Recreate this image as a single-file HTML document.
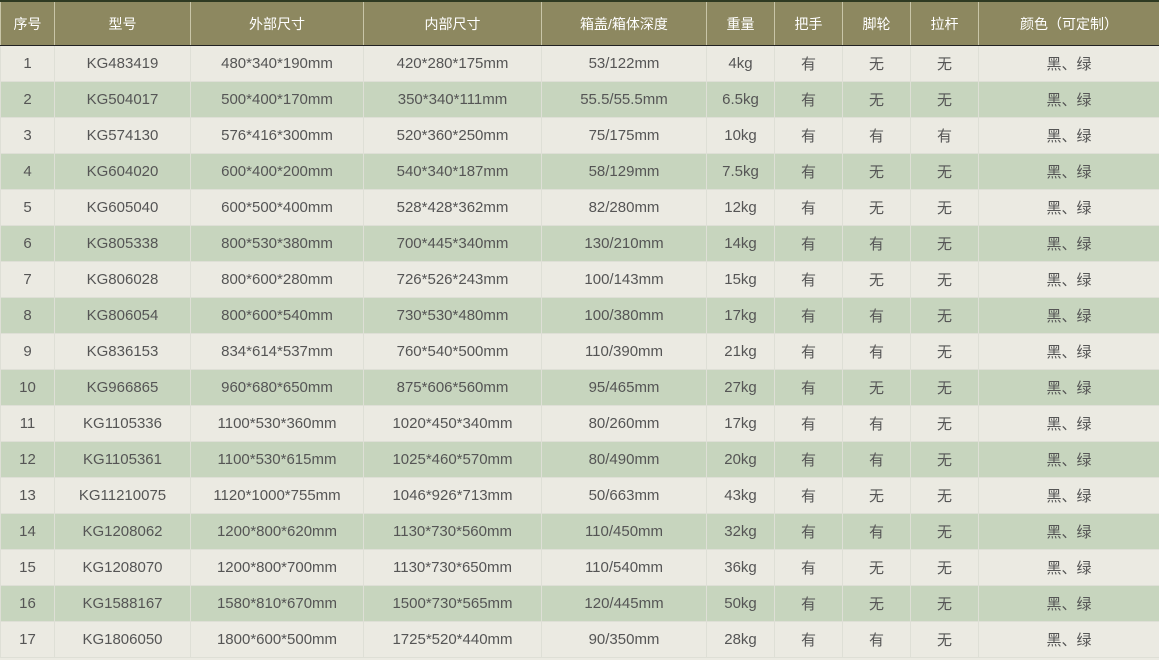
<!DOCTYPE html><html><head><meta charset="utf-8"><style>
body{margin:0;width:1159px;height:660px;overflow:hidden;background:#ebeae2;font-family:"Liberation Sans","Noto Sans CJK SC",sans-serif}
table{border-collapse:collapse;table-layout:fixed;width:1159px}
td,th{text-align:center;padding:0;border:1px solid #dedfd6;font-size:15px;color:#555;font-weight:normal}
th{background:#8d8860;color:#fff;height:43px;font-size:14px;border-color:#c9c5a8;border-top:2px solid #2f3a22;border-bottom:1px solid #222}
td{height:35px}
tr:nth-child(odd) td{background:#ebeae2}
tr:nth-child(even) td{background:#c7d5be}
</style></head><body><table>
<colgroup><col style="width:54px"><col style="width:136px"><col style="width:173px"><col style="width:178px"><col style="width:165px"><col style="width:68px"><col style="width:68px"><col style="width:68px"><col style="width:68px"><col style="width:181px"></colgroup>
<thead><tr><th>序号</th><th>型号</th><th>外部尺寸</th><th>内部尺寸</th><th>箱盖/箱体深度</th><th>重量</th><th>把手</th><th>脚轮</th><th>拉杆</th><th>颜色（可定制）</th></tr></thead>
<tbody>
<tr><td>1</td><td>KG483419</td><td>480*340*190mm</td><td>420*280*175mm</td><td>53/122mm</td><td>4kg</td><td>有</td><td>无</td><td>无</td><td>黑、绿</td></tr>
<tr><td>2</td><td>KG504017</td><td>500*400*170mm</td><td>350*340*111mm</td><td>55.5/55.5mm</td><td>6.5kg</td><td>有</td><td>无</td><td>无</td><td>黑、绿</td></tr>
<tr><td>3</td><td>KG574130</td><td>576*416*300mm</td><td>520*360*250mm</td><td>75/175mm</td><td>10kg</td><td>有</td><td>有</td><td>有</td><td>黑、绿</td></tr>
<tr><td>4</td><td>KG604020</td><td>600*400*200mm</td><td>540*340*187mm</td><td>58/129mm</td><td>7.5kg</td><td>有</td><td>无</td><td>无</td><td>黑、绿</td></tr>
<tr><td>5</td><td>KG605040</td><td>600*500*400mm</td><td>528*428*362mm</td><td>82/280mm</td><td>12kg</td><td>有</td><td>无</td><td>无</td><td>黑、绿</td></tr>
<tr><td>6</td><td>KG805338</td><td>800*530*380mm</td><td>700*445*340mm</td><td>130/210mm</td><td>14kg</td><td>有</td><td>有</td><td>无</td><td>黑、绿</td></tr>
<tr><td>7</td><td>KG806028</td><td>800*600*280mm</td><td>726*526*243mm</td><td>100/143mm</td><td>15kg</td><td>有</td><td>无</td><td>无</td><td>黑、绿</td></tr>
<tr><td>8</td><td>KG806054</td><td>800*600*540mm</td><td>730*530*480mm</td><td>100/380mm</td><td>17kg</td><td>有</td><td>有</td><td>无</td><td>黑、绿</td></tr>
<tr><td>9</td><td>KG836153</td><td>834*614*537mm</td><td>760*540*500mm</td><td>110/390mm</td><td>21kg</td><td>有</td><td>有</td><td>无</td><td>黑、绿</td></tr>
<tr><td>10</td><td>KG966865</td><td>960*680*650mm</td><td>875*606*560mm</td><td>95/465mm</td><td>27kg</td><td>有</td><td>无</td><td>无</td><td>黑、绿</td></tr>
<tr><td>11</td><td>KG1105336</td><td>1100*530*360mm</td><td>1020*450*340mm</td><td>80/260mm</td><td>17kg</td><td>有</td><td>有</td><td>无</td><td>黑、绿</td></tr>
<tr><td>12</td><td>KG1105361</td><td>1100*530*615mm</td><td>1025*460*570mm</td><td>80/490mm</td><td>20kg</td><td>有</td><td>有</td><td>无</td><td>黑、绿</td></tr>
<tr><td>13</td><td>KG11210075</td><td>1120*1000*755mm</td><td>1046*926*713mm</td><td>50/663mm</td><td>43kg</td><td>有</td><td>无</td><td>无</td><td>黑、绿</td></tr>
<tr><td>14</td><td>KG1208062</td><td>1200*800*620mm</td><td>1130*730*560mm</td><td>110/450mm</td><td>32kg</td><td>有</td><td>有</td><td>无</td><td>黑、绿</td></tr>
<tr><td>15</td><td>KG1208070</td><td>1200*800*700mm</td><td>1130*730*650mm</td><td>110/540mm</td><td>36kg</td><td>有</td><td>无</td><td>无</td><td>黑、绿</td></tr>
<tr><td>16</td><td>KG1588167</td><td>1580*810*670mm</td><td>1500*730*565mm</td><td>120/445mm</td><td>50kg</td><td>有</td><td>无</td><td>无</td><td>黑、绿</td></tr>
<tr><td>17</td><td>KG1806050</td><td>1800*600*500mm</td><td>1725*520*440mm</td><td>90/350mm</td><td>28kg</td><td>有</td><td>有</td><td>无</td><td>黑、绿</td></tr>
</tbody></table></body></html>
